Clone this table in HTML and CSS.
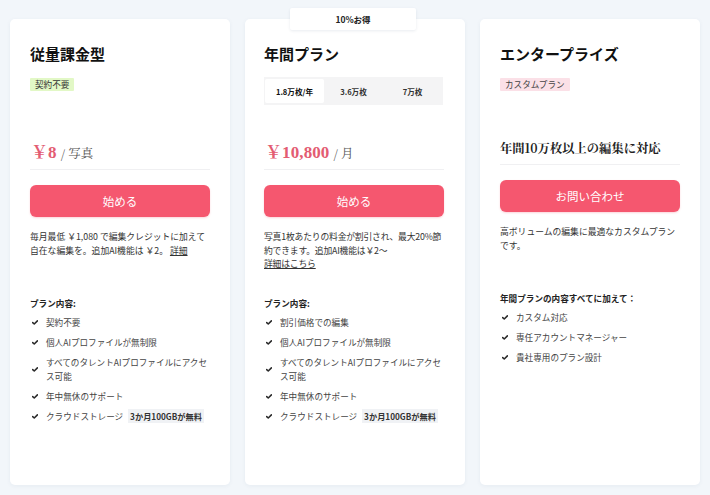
FILE: index.html
```html
<!DOCTYPE html>
<html lang="ja">
<head>
<meta charset="utf-8">
<title>料金プラン</title>
<link rel="stylesheet" href="styles.css">
</head>
<body>
<main class="plans">
  <section class="card">
    <h2 class="title">従量課金型</h2>
    <div class="meta"><span class="tag tag-green">契約不要</span></div>
    <div class="price"><span class="amount">￥8</span><span class="unit">/ 写真</span></div>
    <button class="cta">始める</button>
    <p class="desc">毎月最低 ￥1,080 で編集クレジットに加えて自在な編集を。追加AI機能は ￥2。 <a class="link">詳細</a></p>
    <div class="features">
      <h3 class="feat-head">プラン内容:</h3>
      <ul class="feat-list">
        <li><svg class="check" viewBox="0 0 8 6"><path d="M0.9 3.1 L3 5 L7.2 0.9"/></svg><span>契約不要</span></li>
        <li><svg class="check" viewBox="0 0 8 6"><path d="M0.9 3.1 L3 5 L7.2 0.9"/></svg><span>個人AIプロファイルが無制限</span></li>
        <li><svg class="check" viewBox="0 0 8 6"><path d="M0.9 3.1 L3 5 L7.2 0.9"/></svg><span>すべてのタレントAIプロファイルにアクセス可能</span></li>
        <li><svg class="check" viewBox="0 0 8 6"><path d="M0.9 3.1 L3 5 L7.2 0.9"/></svg><span>年中無休のサポート</span></li>
        <li><svg class="check" viewBox="0 0 8 6"><path d="M0.9 3.1 L3 5 L7.2 0.9"/></svg><span>クラウドストレージ <b class="hl">3か月100GBが無料</b></span></li>
      </ul>
    </div>
  </section>

  <section class="card card-featured">
    <div class="badge">10%お得</div>
    <h2 class="title">年間プラン</h2>
    <div class="meta">
      <div class="segment">
        <span class="seg seg-active">1.8万枚/年</span>
        <span class="seg">3.6万枚</span>
        <span class="seg">7万枚</span>
      </div>
    </div>
    <div class="price"><span class="amount">￥10,800</span><span class="unit">/ 月</span></div>
    <button class="cta">始める</button>
    <p class="desc desc-tight">写真1枚あたりの料金が割引され、最大20%節約できます。追加AI機能は￥2〜<br><a class="link">詳細はこちら</a></p>
    <div class="features">
      <h3 class="feat-head">プラン内容:</h3>
      <ul class="feat-list">
        <li><svg class="check" viewBox="0 0 8 6"><path d="M0.9 3.1 L3 5 L7.2 0.9"/></svg><span>割引価格での編集</span></li>
        <li><svg class="check" viewBox="0 0 8 6"><path d="M0.9 3.1 L3 5 L7.2 0.9"/></svg><span>個人AIプロファイルが無制限</span></li>
        <li><svg class="check" viewBox="0 0 8 6"><path d="M0.9 3.1 L3 5 L7.2 0.9"/></svg><span>すべてのタレントAIプロファイルにアクセス可能</span></li>
        <li><svg class="check" viewBox="0 0 8 6"><path d="M0.9 3.1 L3 5 L7.2 0.9"/></svg><span>年中無休のサポート</span></li>
        <li><svg class="check" viewBox="0 0 8 6"><path d="M0.9 3.1 L3 5 L7.2 0.9"/></svg><span>クラウドストレージ <b class="hl">3か月100GBが無料</b></span></li>
      </ul>
    </div>
  </section>

  <section class="card">
    <h2 class="title">エンタープライズ</h2>
    <div class="meta"><span class="tag tag-pink">カスタムプラン</span></div>
    <div class="enterprise-head">年間10万枚以上の編集に対応</div>
    <button class="cta">お問い合わせ</button>
    <p class="desc">高ボリュームの編集に最適なカスタムプランです。</p>
    <div class="features">
      <h3 class="feat-head">年間プランの内容すべてに加えて：</h3>
      <ul class="feat-list">
        <li><svg class="check" viewBox="0 0 8 6"><path d="M0.9 3.1 L3 5 L7.2 0.9"/></svg><span>カスタム対応</span></li>
        <li><svg class="check" viewBox="0 0 8 6"><path d="M0.9 3.1 L3 5 L7.2 0.9"/></svg><span>専任アカウントマネージャー</span></li>
        <li><svg class="check" viewBox="0 0 8 6"><path d="M0.9 3.1 L3 5 L7.2 0.9"/></svg><span>貴社専用のプラン設計</span></li>
      </ul>
    </div>
  </section>
</main>
</body>
</html>
```

FILE: styles.css
```css
* { box-sizing: border-box; }

html, body {
  margin: 0;
  padding: 0;
  background: #f2f6fa;
}

body {
  font-family: "Noto Sans CJK JP", "Noto Sans", sans-serif;
  color: #222;
  width: 710px;
  height: 495px;
  overflow: hidden;
}

.plans {
  display: flex;
  gap: 15px;
  padding: 19px 10px 10px;
  height: 495px;
}

.card {
  position: relative;
  width: 220px;
  flex: 0 0 220px;
  background: #fff;
  border-radius: 5px;
  box-shadow: 0 1px 4px rgba(40, 70, 110, 0.06);
  padding: 23px 20px 20px;
  display: flex;
  flex-direction: column;
}

.card-featured {
  padding-left: 19px;
  padding-right: 21px;
}

.badge {
  position: absolute;
  top: -11px;
  left: 45px;
  width: 126px;
  height: 22px;
  background: #fff;
  box-shadow: 0 1px 3px rgba(40, 70, 110, 0.1);
  border-radius: 2px;
  font-size: 8.5px;
  font-weight: 700;
  color: #222;
  display: flex;
  align-items: center;
  justify-content: center;
}

.title {
  margin: 0;
  font-size: 15px;
  line-height: 24px;
  font-weight: 700;
  color: #111;
}

.meta {
  margin-top: 11px;
  height: 28px;
  display: flex;
  align-items: flex-start;
}

.tag {
  margin-top: 1px;
  height: 13px;
  line-height: 13px;
  padding: 0 5px;
  font-size: 8.6px;
  color: #333;
  border-radius: 1px;
}

.tag-green { background: #e2f8c6; }
.tag-pink { background: #fbe0e7; color: #444; }

.segment {
  display: flex;
  width: 179px;
  height: 28px;
  background: #f4f4f5;
  padding: 2px 1px;
}

.seg {
  flex: 1;
  display: flex;
  align-items: center;
  justify-content: center;
  font-size: 7.6px;
  font-weight: 700;
  color: #333;
}

.seg-active {
  background: #fff;
  color: #111;
  border-radius: 2px;
}

.price {
  margin-top: 36px;
  line-height: 24px;
  padding-bottom: 4px;
  border-bottom: 1px solid #f0f0f2;
  display: flex;
  align-items: baseline;
  padding-left: 1px;
}

.amount {
  font-family: "Liberation Serif", "Noto Serif CJK JP", "Noto Sans CJK JP", serif;
  font-size: 17px;
  font-weight: 700;
  color: #e35c72;
  letter-spacing: 0.1px;
}

.unit {
  margin-left: 4px;
  font-family: "Noto Serif CJK JP", "Liberation Serif", "Noto Sans CJK JP", serif;
  font-size: 12.5px;
  color: #555;
}

.enterprise-head {
  margin-top: 32px;
  line-height: 22px;
  padding-bottom: 5px;
  border-bottom: 1px solid #f0f0f2;
  font-family: "Noto Serif CJK JP", "Liberation Serif", "Noto Sans CJK JP", serif;
  font-size: 12.3px;
  font-weight: 700;
  color: #222;
}

.cta {
  margin-top: 15px;
  width: 100%;
  height: 32px;
  border: 0;
  border-radius: 6px;
  background: #f5576f;
  color: #fff;
  font-family: "Noto Sans CJK JP", sans-serif;
  font-size: 11.5px;
  box-shadow: 0 1px 2px rgba(245, 87, 111, 0.25);
  padding: 0;
}

.desc {
  margin: 13px 0 0;
  min-height: 42px;
  font-size: 8.8px;
  line-height: 13.5px;
  color: #333;
}

.desc-tight {
  letter-spacing: -0.18px;
}

.link {
  color: #333;
  text-decoration: underline;
  text-underline-offset: 1px;
}

.features {
  margin-top: 24px;
}

.feat-head {
  margin: 0 0 5px;
  font-size: 8.6px;
  line-height: 14px;
  font-weight: 700;
  color: #222;
}

.feat-list {
  list-style: none;
  margin: 0;
  padding: 0 0 0 2px;
  display: flex;
  flex-direction: column;
  gap: 6px;
}

.feat-list li {
  display: flex;
  align-items: center;
  gap: 8px;
  font-size: 8.6px;
  line-height: 14px;
  color: #444;
}

.check {
  flex: 0 0 6px;
  width: 6px;
  height: 5px;
  fill: none;
  stroke: #2a2a2a;
  stroke-width: 2.1;
  stroke-linecap: round;
  stroke-linejoin: round;
}

.hl {
  margin-left: 3px;
  padding: 1px 2px;
  background: #f0f2f5;
  font-weight: 700;
  color: #333;
  font-size: 8.2px;
}
```
